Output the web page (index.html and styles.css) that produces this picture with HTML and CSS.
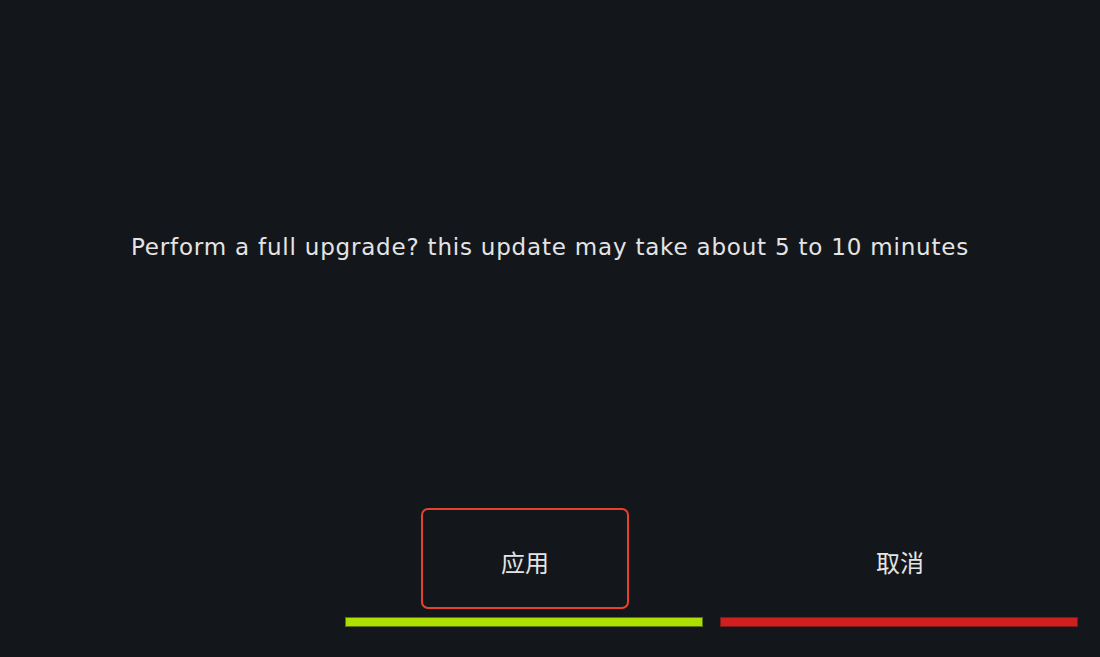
FILE: index.html
```html
<!DOCTYPE html>
<html lang="zh">
<head>
    <meta charset="UTF-8">
    <meta name="viewport" content="width=device-width, initial-scale=1.0">
    <title>Upgrade</title>
    <link rel="stylesheet" href="styles.css">
</head>
<body>

    <div class="dialog">
        <div class="message">
            <p>Perform a full upgrade? this update may take about 5 to 10 minutes</p>
        </div>

        <div class="actions">
            <div class="action apply">
                <button class="action-btn focused">应用</button>
                <div class="bar"></div>
            </div>
            <div class="action cancel">
                <button class="action-btn">取消</button>
                <div class="bar"></div>
            </div>
        </div>
    </div>

</body>
</html>
```

FILE: styles.css
```css
html, body {
    margin: 0;
    padding: 0;
    background-color: #13171b;
    color: #e4e4e4;
    font-family: "DejaVu Sans", "Noto Sans CJK SC", sans-serif;
}
.dialog {
    height: 657px;
    display: flex;
    flex-direction: column;
}
.message {
    flex: 1;
    display: flex;
    align-items: center;
    justify-content: center;
    padding-bottom: 14px;
}
.message p {
    margin: 0;
    font-size: 23px;
    letter-spacing: 0.8px;
}
.actions {
    display: flex;
    justify-content: flex-end;
    gap: 17px;
    padding: 0 22px 30px;
}
.action {
    width: 358px;
    display: flex;
    flex-direction: column;
    align-items: center;
}
.action-btn {
    width: 208px;
    height: 101px;
    margin-left: 2px;
    padding-top: 6px;
    background: none;
    border: 2px solid transparent;
    border-radius: 7px;
    color: #e4e4e4;
    font-family: "Noto Sans CJK SC", "DejaVu Sans", sans-serif;
    font-size: 24px;
    cursor: pointer;
}
.action-btn.focused {
    border-color: #e8412b;
}
.bar {
    width: 100%;
    height: 10px;
    margin-top: 8px;
    box-sizing: border-box;
}
.apply .bar {
    background: #ade000;
    border: 1px solid #5c7410;
}
.cancel .bar {
    background: #cf1f1f;
    border: 1px solid #7a1a1a;
}
```
